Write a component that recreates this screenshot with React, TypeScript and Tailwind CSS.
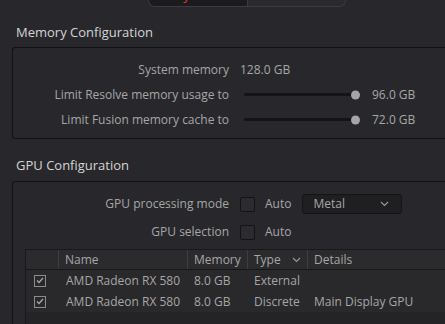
const font = { fontFamily: '"Open Sans", "Noto Sans", sans-serif' };

function Chevron({ className = '' }: { className?: string }) {
  return (
    <svg className={className} width="9" height="6" viewBox="0 0 9 6" fill="none">
      <path d="M1 1l3.5 3.5L8 1" stroke="#9a9a9a" strokeWidth="1.1" />
    </svg>
  );
}

function Slider({ value }: { value: string }) {
  return (
    <div className="flex items-center">
      <div className="relative ml-[4px] h-[3px] w-[116px] rounded-full bg-[#141416]">
        <div className="absolute right-0 top-1/2 h-[9px] w-[9px] -translate-y-1/2 rounded-full bg-[#a5a5a5]" />
      </div>
      <span className="ml-[12px]">{value}</span>
    </div>
  );
}

function Box() {
  return <div className="h-[15px] w-[15px] rounded-[2px] border border-[#131315] bg-[#2c2c30]" />;
}

function Tick() {
  return (
    <div className="flex h-[12px] w-[12px] items-center justify-center border border-[#8c8c8c]">
      <svg width="8" height="7" viewBox="0 0 8 7" fill="none">
        <path d="M1 3.5l2 2L7 1" stroke="#a8a8a8" strokeWidth="1.3" />
      </svg>
    </div>
  );
}

const gpus = [
  { name: 'AMD Radeon RX 580', mem: '8.0 GB', type: 'External', details: '' },
  { name: 'AMD Radeon RX 580', mem: '8.0 GB', type: 'Discrete', details: 'Main Display GPU' },
];

export default function App() {
  return (
    <div className="h-[324px] w-[445px] overflow-hidden bg-[#28282c] text-[12px] text-[#a6a6a6]" style={font}>
      {/* tabs */}
      <div className="ml-[148px] flex h-[7px] w-[198px] overflow-hidden rounded-b-[7px] border border-t-0 border-[#3c3c40]">
        <div className="-mt-[14px] flex h-[20px] w-[98px] items-center justify-center bg-[#1b1b1d] text-[13px] text-[#e23b30]">
          System
        </div>
        <div className="-mt-[14px] flex h-[20px] flex-1 items-center justify-center border-l border-[#3c3c40] bg-[#2a2a2e] text-[13px] text-[#c8c8c8]">
          User
        </div>
      </div>

      <div className="ml-[16px] mt-[17px] h-[16px] text-[13px] leading-[16px] text-[#d4d4d4]">Memory Configuration</div>

      <div className="ml-[12px] mt-[7px] h-[92px] rounded-l-[3px] border border-r-0 border-[#131315] pt-[9px]">
        <div className="flex h-[25px] items-center">
          <div className="w-[216px] text-right">System memory</div>
          <span className="ml-[11px]">128.0 GB</span>
        </div>
        <div className="flex h-[25px] items-center">
          <div className="w-[216px] text-right">Limit Resolve memory usage to</div>
          <div className="ml-[11px]"><Slider value="96.0 GB" /></div>
        </div>
        <div className="flex h-[25px] items-center">
          <div className="w-[216px] text-right">Limit Fusion memory cache to</div>
          <div className="ml-[11px]"><Slider value="72.0 GB" /></div>
        </div>
      </div>

      <div className="ml-[16px] mt-[18px] h-[16px] text-[13px] leading-[16px] text-[#d4d4d4]">GPU Configuration</div>

      <div className="ml-[12px] mt-[8px] h-[200px] rounded-tl-[3px] border border-r-0 border-b-0 border-[#131315] pt-[12px]">
        <div className="flex h-[20px] items-center">
          <div className="w-[216px] text-right">GPU processing mode</div>
          <div className="ml-[11px]"><Box /></div>
          <span className="ml-[10px]">Auto</span>
          <div className="ml-[11px] flex h-[20px] w-[100px] items-center justify-between rounded-[3px] border border-[#141416] bg-[#1f1f22] pl-[10px] pr-[12px]">
            <span>Metal</span>
            <Chevron />
          </div>
        </div>
        <div className="mt-[8px] flex h-[20px] items-center">
          <div className="w-[216px] text-right">GPU selection</div>
          <div className="ml-[11px]"><Box /></div>
          <span className="ml-[10px]">Auto</span>
        </div>

        <div className="ml-[12px] mt-[7px] h-[100px] border-l border-t border-[#18181a] bg-[#242427]">
          <div className="flex h-[20px] items-center border-b border-[#18181a] bg-[#2b2b2e]">
            <div className="h-full w-[32px]" />
            <div className="flex h-full w-[129px] items-center border-l border-[#3e3e42] pl-[6px]">Name</div>
            <div className="flex h-full w-[60px] items-center border-l border-[#3e3e42] pl-[6px]">Memory</div>
            <div className="flex h-full w-[60px] items-center justify-between border-l border-[#3e3e42] pl-[6px] pr-[6px]">
              <span>Type</span>
              <Chevron />
            </div>
            <div className="flex h-full flex-1 items-center border-l border-[#3e3e42] pl-[6px]">Details</div>
          </div>
          {gpus.map((g, i) => (
            <div className="flex h-[21px] items-center bg-[#29292c]" key={i}>
              <div className="flex w-[32px] pl-[8px]"><Tick /></div>
              <div className="w-[129px] pl-[8px]">{g.name}</div>
              <div className="w-[60px] pl-[7px]">{g.mem}</div>
              <div className="w-[60px] pl-[7px]">{g.type}</div>
              <div className="flex-1 pl-[7px]">{g.details}</div>
            </div>
          ))}
        </div>
      </div>
    </div>
  );
}
